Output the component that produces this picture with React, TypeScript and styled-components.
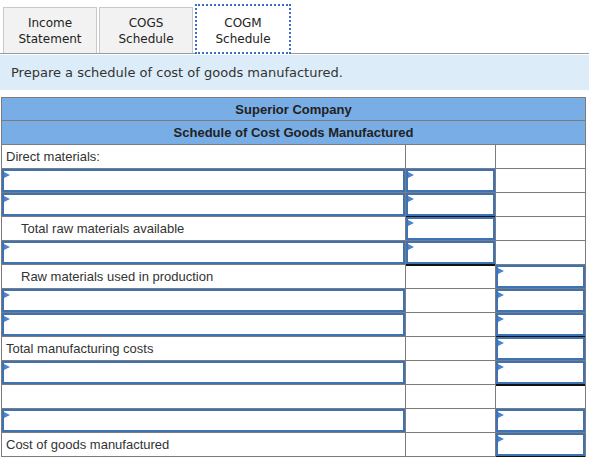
import React from 'react';
import styled, { createGlobalStyle } from 'styled-components';

const GlobalStyle = createGlobalStyle`
  html, body {
    margin: 0;
    padding: 0;
    background: #fff;
  }
  body {
    font-family: "Liberation Sans", Arial, sans-serif;
  }
`;

const Page = styled.div`
  width: 589px;
`;

const TabBar = styled.div`
  display: flex;
  align-items: flex-end;
  gap: 2px;
  padding-left: 3px;
  height: 54px;
  box-sizing: border-box;
  border-bottom: 1px solid #9a9a9a;
`;

const Tab = styled.button<{ $active?: boolean }>`
  box-sizing: border-box;
  width: ${p => (p.$active ? 96 : 94)}px;
  height: ${p => (p.$active ? 50 : 46)}px;
  margin-bottom: ${p => (p.$active ? -1 : 0)}px;
  padding: ${p => (p.$active ? '4px 0 0' : '0')};
  font-family: "DejaVu Sans", Verdana, sans-serif;
  font-size: 12px;
  line-height: 16px;
  color: #222;
  background: ${p => (p.$active ? '#fff' : '#f2f2f2')};
  border: ${p => (p.$active ? '2px dotted #3b6fc0' : '1px solid #c9c9c9')};
  border-bottom: ${p => (p.$active ? '2px dotted #3b6fc0' : 'none')};
  cursor: pointer;
`;

const Instruction = styled.div`
  margin-top: 1px;
  height: 35px;
  display: flex;
  align-items: center;
  padding-left: 11px;
  background: #dcedf9;
  font-family: "DejaVu Sans", Verdana, sans-serif;
  font-size: 13px;
  color: #333;
`;

const TableWrap = styled.div`
  padding: 7px 0 0 1px;
`;

const Sheet = styled.table`
  border-collapse: collapse;
  border-spacing: 0;
  font-size: 13px;
  color: #333;
`;

const HeadCell = styled.th<{ $h: number }>`
  padding: 0;
  height: ${p => p.$h}px;
  background: #79ade5;
  border: 1px solid #7c7c7c;
  font-weight: bold;
  color: #222;
  text-align: center;
  vertical-align: middle;
`;

const Cell = styled.td`
  padding: 0;
  border: 1px solid #7c7c7c;
  vertical-align: top;
`;

const Label = styled.div<{ $w: number; $indent?: boolean }>`
  box-sizing: border-box;
  width: ${p => p.$w}px;
  height: 23px;
  line-height: 23px;
  padding-left: ${p => (p.$indent ? 19 : 4)}px;
  white-space: nowrap;
`;

const rules = {
  none: 'none',
  single: '0 1px 0 #111, 0 2px 0 #111',
  double: '0 1px 0 #111, 0 2px 0 #fff, 0 3px 0 #111',
};

const InputBox = styled.div<{ $w: number; $rule: keyof typeof rules }>`
  position: relative;
  z-index: 1;
  box-sizing: border-box;
  width: ${p => p.$w}px;
  height: 23px;
  border: 2px solid #3f71b5;
  background: #fff;
  box-shadow: ${p => rules[p.$rule]};

  &::before {
    content: '';
    position: absolute;
    left: 0;
    top: 1px;
    border-left: 6px solid #4a84cc;
    border-top: 3px solid transparent;
    border-bottom: 3px solid transparent;
  }
`;

type Slot = { kind: 'plain' } | { kind: 'input'; rule?: 'single' | 'double' };
type Row = { label?: string; indent?: boolean; first?: Slot; mid: Slot; last: Slot };

const P: Slot = { kind: 'plain' };
const I: Slot = { kind: 'input' };
const I1: Slot = { kind: 'input', rule: 'single' };
const I2: Slot = { kind: 'input', rule: 'double' };

const rows: Row[] = [
  { label: 'Direct materials:', mid: P, last: P },
  { first: I, mid: I, last: P },
  { first: I, mid: I1, last: P },
  { label: 'Total raw materials available', indent: true, mid: I, last: P },
  { first: I, mid: I1, last: P },
  { label: 'Raw materials used in production', indent: true, mid: P, last: I },
  { first: I, mid: P, last: I },
  { first: I, mid: P, last: I1 },
  { label: 'Total manufacturing costs', mid: P, last: I },
  { first: I, mid: P, last: I1 },
  { first: P, mid: P, last: P },
  { first: I, mid: P, last: I },
  { label: 'Cost of goods manufactured', mid: P, last: I2 },
];

const widths = [403, 89, 89];

const SlotCell = ({ slot, w }: { slot: Slot; w: number }) => (
  <Cell>
    {slot.kind === 'input' ? <InputBox $w={w} $rule={slot.rule ?? 'none'} /> : <Label $w={w} />}
  </Cell>
);

export default function App() {
  return (
    <Page>
      <GlobalStyle />
      <TabBar>
        <Tab>Income<br />Statement</Tab>
        <Tab>COGS<br />Schedule</Tab>
        <Tab $active>COGM<br />Schedule</Tab>
      </TabBar>
      <Instruction>Prepare a schedule of cost of goods manufactured.</Instruction>
      <TableWrap>
        <Sheet>
          <thead>
            <tr>
              <HeadCell colSpan={3} $h={22}>Superior Company</HeadCell>
            </tr>
            <tr>
              <HeadCell colSpan={3} $h={23}>Schedule of Cost Goods Manufactured</HeadCell>
            </tr>
          </thead>
          <tbody>
            {rows.map((r, i) => (
              <tr key={i}>
                {r.label ? (
                  <Cell>
                    <Label $w={widths[0]} $indent={r.indent}>{r.label}</Label>
                  </Cell>
                ) : (
                  <SlotCell slot={r.first ?? P} w={widths[0]} />
                )}
                <SlotCell slot={r.mid} w={widths[1]} />
                <SlotCell slot={r.last} w={widths[2]} />
              </tr>
            ))}
          </tbody>
        </Sheet>
      </TableWrap>
    </Page>
  );
}
